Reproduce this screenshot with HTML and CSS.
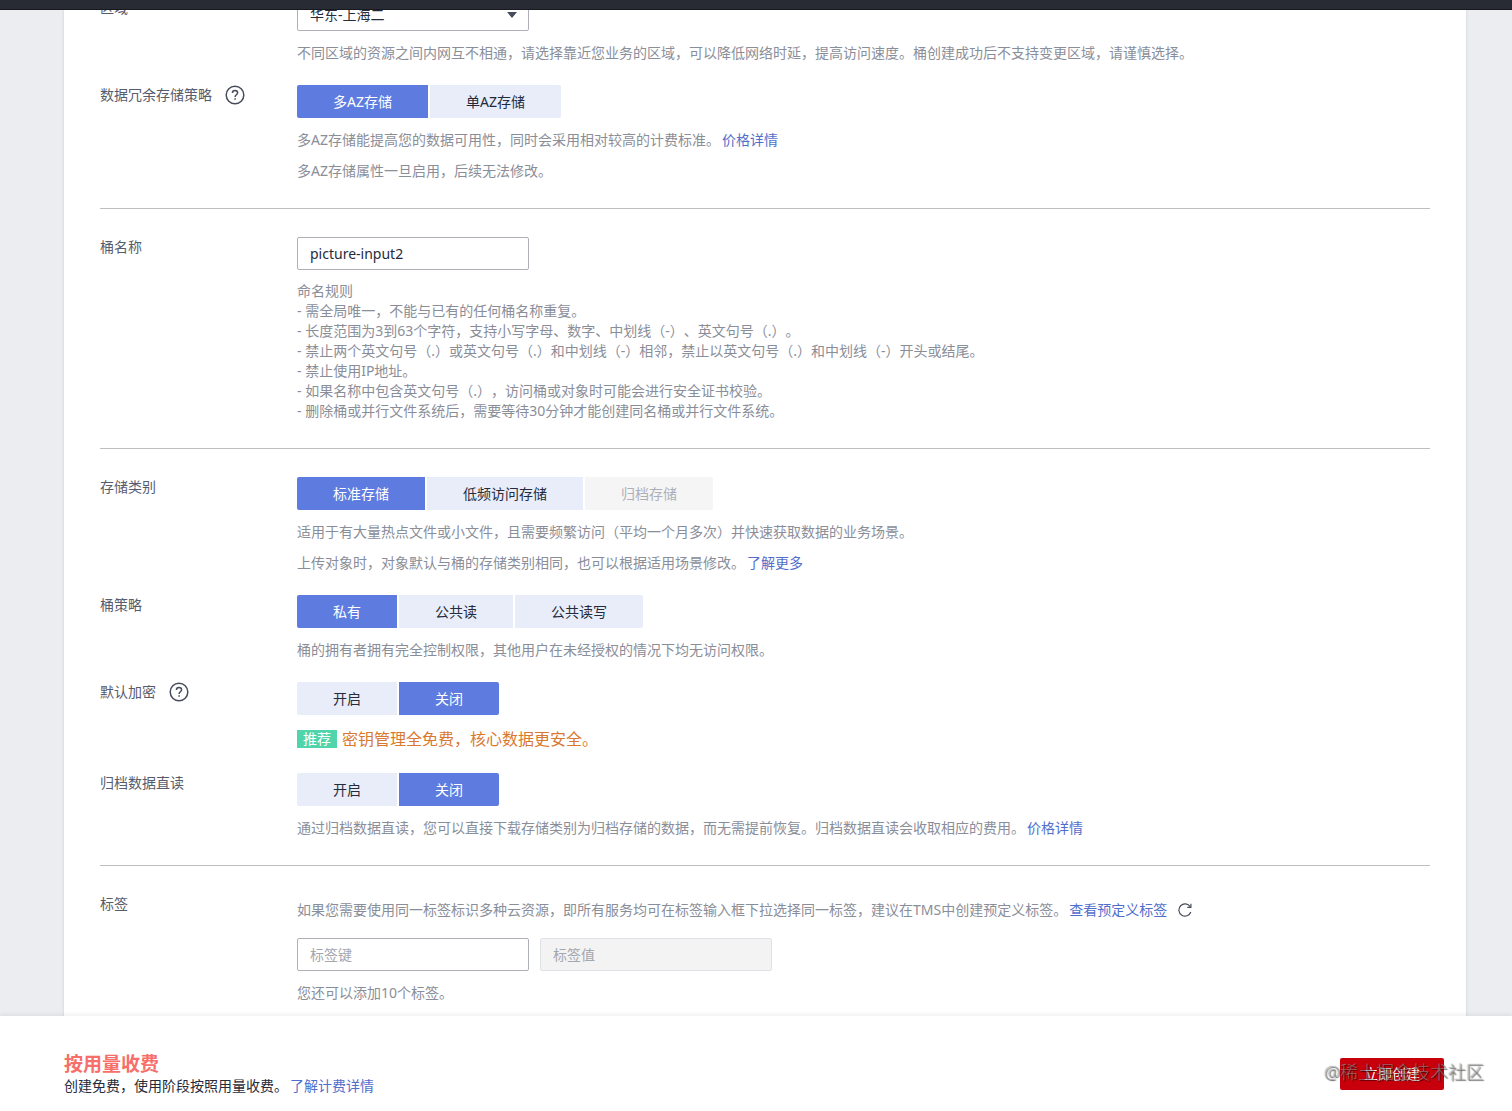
FILE: index.html
```html
<!DOCTYPE html>
<html lang="zh-CN">
<head>
<meta charset="utf-8">
<meta name="viewport" content="width=device-width, initial-scale=1">
<title>创建桶</title>
<link rel="stylesheet" href="styles.css">
</head>
<body>
<header class="topbar"></header>
<main class="viewport">
  <form class="panel" id="bucket-form">
    <section class="section">
      <div class="row">
        <label class="label" for="region">区域</label>
        <div class="field">
          <div class="select-wrap">
            <select class="control" id="region"><option>华东-上海二</option></select>
            <svg class="caret" viewBox="0 0 10 6" aria-hidden="true"><path d="M0 0h10L5 6z" fill="#464c59"/></svg>
          </div>
          <p class="hint">不同区域的资源之间内网互不相通，请选择靠近您业务的区域，可以降低网络时延，提高访问速度。桶创建成功后不支持变更区域，请谨慎选择。</p>
        </div>
      </div>
      <div class="row">
        <div class="label">数据冗余存储策略
          <button class="help" type="button" aria-label="帮助"><svg viewBox="0 0 20 20"><circle cx="10" cy="10" r="8.8"/><path d="M7.4 8.1c0-1.7 1.1-2.6 2.6-2.6s2.6.9 2.6 2.3c0 1.9-2.5 2-2.5 4.1"/><path d="M10.1 13.2v1.6"/></svg></button>
        </div>
        <div class="field">
          <div class="segments">
            <button class="segment active" type="button">多AZ存储</button>
            <button class="segment" type="button">单AZ存储</button>
          </div>
          <p class="hint">多AZ存储能提高您的数据可用性，同时会采用相对较高的计费标准。<a class="link" href="#price">价格详情</a></p>
          <p class="hint">多AZ存储属性一旦启用，后续无法修改。</p>
        </div>
      </div>
    </section>

    <section class="section">
      <div class="row">
        <label class="label" for="bucket-name">桶名称</label>
        <div class="field">
          <input class="control" id="bucket-name" type="text" value="picture-input2">
          <div class="rules">
            <p>命名规则</p>
            <p>- 需全局唯一，不能与已有的任何桶名称重复。</p>
            <p>- 长度范围为3到63个字符，支持小写字母、数字、中划线（-）、英文句号（.）。</p>
            <p>- 禁止两个英文句号（.）或英文句号（.）和中划线（-）相邻，禁止以英文句号（.）和中划线（-）开头或结尾。</p>
            <p>- 禁止使用IP地址。</p>
            <p>- 如果名称中包含英文句号（.），访问桶或对象时可能会进行安全证书校验。</p>
            <p>- 删除桶或并行文件系统后，需要等待30分钟才能创建同名桶或并行文件系统。</p>
          </div>
        </div>
      </div>
    </section>

    <section class="section">
      <div class="row">
        <div class="label">存储类别</div>
        <div class="field">
          <div class="segments">
            <button class="segment active" type="button">标准存储</button>
            <button class="segment" type="button">低频访问存储</button>
            <button class="segment" type="button" disabled>归档存储</button>
          </div>
          <p class="hint">适用于有大量热点文件或小文件，且需要频繁访问（平均一个月多次）并快速获取数据的业务场景。</p>
          <p class="hint">上传对象时，对象默认与桶的存储类别相同，也可以根据适用场景修改。<a class="link" href="#classes">了解更多</a></p>
        </div>
      </div>
      <div class="row">
        <div class="label">桶策略</div>
        <div class="field">
          <div class="segments">
            <button class="segment active" type="button">私有</button>
            <button class="segment" type="button">公共读</button>
            <button class="segment" type="button">公共读写</button>
          </div>
          <p class="hint">桶的拥有者拥有完全控制权限，其他用户在未经授权的情况下均无访问权限。</p>
        </div>
      </div>
      <div class="row">
        <div class="label">默认加密
          <button class="help" type="button" aria-label="帮助"><svg viewBox="0 0 20 20"><circle cx="10" cy="10" r="8.8"/><path d="M7.4 8.1c0-1.7 1.1-2.6 2.6-2.6s2.6.9 2.6 2.3c0 1.9-2.5 2-2.5 4.1"/><path d="M10.1 13.2v1.6"/></svg></button>
        </div>
        <div class="field">
          <div class="segments">
            <button class="segment" type="button">开启</button>
            <button class="segment active" type="button">关闭</button>
          </div>
          <p class="promo"><span class="badge">推荐</span>密钥管理全免费，核心数据更安全。</p>
        </div>
      </div>
      <div class="row">
        <div class="label">归档数据直读</div>
        <div class="field">
          <div class="segments">
            <button class="segment" type="button">开启</button>
            <button class="segment active" type="button">关闭</button>
          </div>
          <p class="hint">通过归档数据直读，您可以直接下载存储类别为归档存储的数据，而无需提前恢复。归档数据直读会收取相应的费用。<a class="link" href="#read-price">价格详情</a></p>
        </div>
      </div>
    </section>

    <section class="section">
      <div class="row">
        <label class="label" for="tag-key">标签</label>
        <div class="field">
          <p class="tag-intro">如果您需要使用同一标签标识多种云资源，即所有服务均可在标签输入框下拉选择同一标签，建议在TMS中创建预定义标签。<a class="link" href="#tags">查看预定义标签</a>
            <button class="refresh" type="button" aria-label="刷新"><svg viewBox="0 0 14 14"><path d="M12.8 9A6.1 6.1 0 1 1 12.2 3.8"/><path d="M12.9 0.8v3.6H9.3"/></svg></button>
          </p>
          <div class="tag-inputs">
            <input class="control" id="tag-key" type="text" placeholder="标签键">
            <input class="control" type="text" placeholder="标签值" aria-label="标签值" disabled>
          </div>
          <p class="hint">您还可以添加10个标签。</p>
        </div>
      </div>
    </section>
  </form>
</main>
<footer class="footer">
  <div class="billing">
    <strong class="billing-title">按用量收费</strong>
    <p class="billing-note">创建免费，使用阶段按照用量收费。<a class="link" href="#billing">了解计费详情</a></p>
  </div>
  <div class="submit-area">
    <button class="submit" type="submit" form="bucket-form">立即创建</button>
    <span class="watermark">@稀土掘金技术社区</span>
  </div>
</footer>
</body>
</html>
```
FILE: styles.css
```css
* {
  box-sizing: border-box;
}

body {
  display: flex;
  flex-direction: column;
  height: 100vh;
  margin: 0;
  background: #ebedf1;
  color: #252b3a;
  font: 400 14px/20px "Noto Sans", "Noto Sans CJK SC", sans-serif;
  text-spacing-trim: space-all;
}

p {
  margin: 0;
}

button,
input,
select {
  margin: 0;
  font: inherit;
}

button {
  cursor: pointer;
}

.topbar {
  flex: none;
  height: 10px;
  background: #282b33;
  border-bottom: 1px solid #17191f;
}

.viewport {
  flex: 1;
  min-height: 0;
  overflow: hidden;
}

/* The form is scrolled a little way under the top bar. */
.panel {
  min-height: 100%;
  margin: -12px 46px 0 64px;
  padding: 0 36px 22px;
  background: #fff;
  box-shadow: 0 0 3px rgba(0, 0, 0, 0.12);
}

.section {
  display: flex;
  flex-direction: column;
  gap: 22px;
  padding-bottom: 27px;
}

.section + .section {
  padding-top: 28px;
  border-top: 1px solid #bcbec2;
}

.row {
  display: grid;
  grid-template-columns: 197px 1fr;
}

.label {
  display: flex;
  align-items: center;
  gap: 13px;
  height: 20px;
  color: #575d6c;
}

.help,
.refresh {
  display: flex;
  padding: 0;
  border: 0;
  background: none;
}

.help svg,
.refresh svg {
  width: 20px;
  height: 20px;
  fill: none;
  stroke: #464c59;
  stroke-width: 1.5;
}

.refresh svg {
  width: 14px;
  height: 14px;
  stroke-width: 1.2;
}

.field {
  display: flex;
  flex-direction: column;
  align-items: flex-start;
  gap: 12px;
}

.control {
  display: block;
  width: 232px;
  height: 33px;
  padding: 0 12px;
  border: 1px solid #adb0b8;
  border-radius: 2px;
  background: #fff;
  color: #252b3a;
  appearance: none;
}

.control::placeholder {
  color: #a4a7ae;
}

.control:disabled {
  border-color: #dfe1e6;
  background: #f3f3f4;
}

.select-wrap {
  position: relative;
}

.caret {
  position: absolute;
  top: 14px;
  right: 12px;
  width: 10px;
  height: 6px;
  pointer-events: none;
}

.segments {
  display: flex;
  gap: 2px;
}

.segment {
  height: 33px;
  padding: 0 36px;
  border: 0;
  background: #e9edfa;
  color: #252b3a;
}

.segment:first-child {
  border-radius: 2px 0 0 2px;
}

.segment:last-child {
  border-radius: 0 2px 2px 0;
}

.segment.active {
  background: #5e7ce0;
  color: #fff;
}

.segment:disabled {
  background: #f5f5f6;
  color: #adb0b8;
}

.hint,
.rules,
.tag-intro {
  color: #8a8e99;
}

.hint + .hint,
.rules {
  margin-top: -1px;
}

.link {
  margin-left: 2px;
  color: #526ecc;
  text-decoration: none;
}

.promo {
  display: flex;
  align-items: center;
  gap: 5px;
  color: #d9792f;
  font-size: 16px;
  line-height: 24px;
}

.badge {
  padding: 0 6px;
  background: #50d4ab;
  color: #fff;
  font-size: 14px;
  line-height: 18px;
}

.tag-intro {
  display: flex;
  align-items: center;
  height: 32px;
}

.refresh {
  margin-left: 11px;
}

.tag-inputs {
  display: flex;
  gap: 11px;
}

.footer {
  position: relative;
  display: flex;
  flex: none;
  align-items: center;
  justify-content: space-between;
  min-height: 95px;
  padding: 20px 68px 0 64px;
  background: #fff;
  box-shadow: 0 -2px 4px rgba(0, 0, 0, 0.06);
}

.billing-title {
  display: block;
  color: #f66f6a;
  font-size: 19px;
  font-weight: 700;
  line-height: 24px;
}

.submit-area {
  position: relative;
}

.submit {
  display: block;
  width: 104px;
  height: 32px;
  padding: 0;
  border: 0;
  border-radius: 2px;
  background: #c7000b;
  color: #fff;
}

.watermark {
  position: absolute;
  top: 4px;
  right: -40px;
  color: rgba(255, 255, 255, 0.4);
  font-size: 18px;
  font-weight: 300;
  line-height: 20px;
  white-space: nowrap;
  text-shadow: 1px 1px 1px rgba(0, 0, 0, 0.6), 0 0 1px rgba(0, 0, 0, 0.5);
  pointer-events: none;
}
```
